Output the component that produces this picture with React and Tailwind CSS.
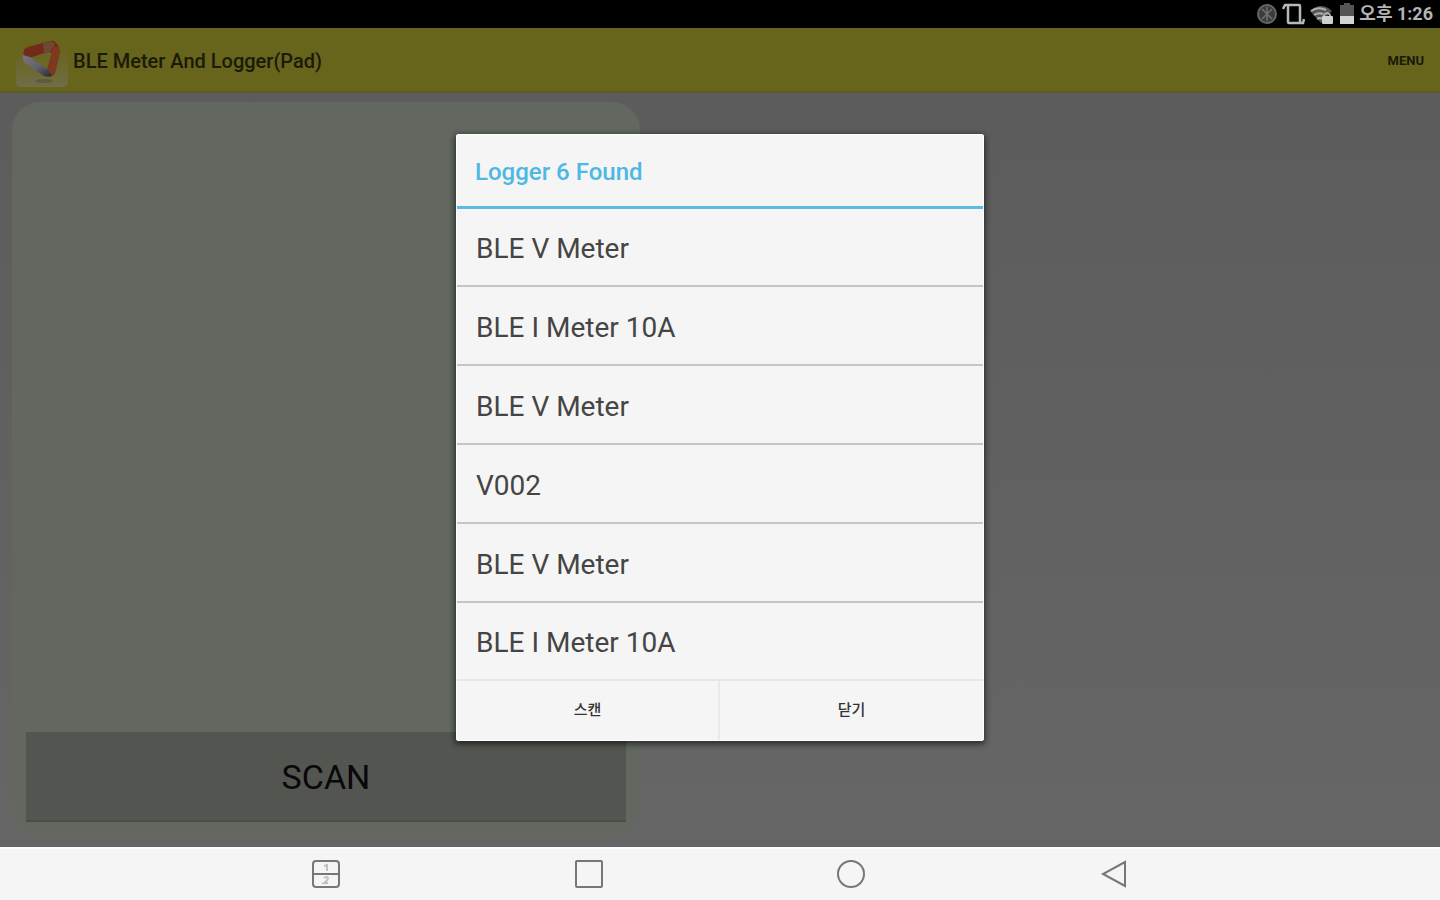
import { useState } from 'react'

const loggers = ['BLE V Meter', 'BLE I Meter 10A', 'BLE V Meter', 'V002', 'BLE V Meter', 'BLE I Meter 10A']

function StatusBar() {
  return (
    <div className="h-7 bg-black flex items-center justify-end gap-1 pr-[7px] text-[#b4b4b4]">
      <svg width="22" height="22" viewBox="0 0 22 22" fill="none" aria-hidden="true">
        <circle cx="11" cy="11" r="9" stroke="#666" strokeWidth="2" fill="#3c3c3c" />
        <path d="M6 6l10 10M6 16L16 6M11 4v14" stroke="#707070" strokeWidth="1.5" />
      </svg>
      <svg width="23" height="24" viewBox="0 0 23 24" fill="none" stroke="#b8b8b8" aria-hidden="true">
        <rect x="6" y="3" width="12" height="18" rx="1" strokeWidth="2.5" />
        <path d="M1 7l2-4h4M22 17l-1 4h-4" strokeWidth="2.5" />
      </svg>
      <svg width="26" height="22" viewBox="0 0 26 22" fill="none" aria-hidden="true">
        <path d="M1 8Q12-2 23 8L18 13L12 20Z" fill="#555" />
        <path d="M2 8Q9 3 17 7M5 12q5-3 9-1M8 16q3-2 5 0" stroke="#b0b0b0" strokeWidth="2" />
        <path d="M15 14v-2q3-4 6 0v2" stroke="#aaa" strokeWidth="2" />
        <rect x="13" y="13" width="11" height="8" rx="1" fill="#d0d0d0" />
      </svg>
      <svg width="16" height="22" viewBox="0 0 16 22" aria-hidden="true">
        <path d="M5 0h6v2h4v11H1V2h4z" fill="#555" />
        <path d="M1 13h14v8H1z" fill="#d4d4d4" />
      </svg>
      <span className="text-[18px] leading-7 font-bold whitespace-nowrap">오후 1:26</span>
    </div>
  )
}

function AppLogo() {
  return (
    <svg width="52" height="52" viewBox="0 0 52 52" aria-hidden="true">
      <defs>
        <linearGradient id="plate" x1="0" y1="0" x2="0" y2="1">
          <stop offset="0.2" stopColor="#6e6b36" stopOpacity="0" />
          <stop offset="1" stopColor="#706d48" />
        </linearGradient>
        <linearGradient id="blade" x1="0" y1="0" x2="1" y2="1">
          <stop offset="0" stopColor="#77747c" />
          <stop offset="0.5" stopColor="#666471" />
          <stop offset="1" stopColor="#29282e" />
        </linearGradient>
      </defs>
      <rect width="52" height="52" rx="5" fill="url(#plate)" />
      <path d="M7 22l1-7q1-2 4-3L34 6q3-1 5 1l4 4-5 7-6-1-19 6z" fill="#722a1b" />
      <path d="M27 8l8-2 4 3-4 7-7 2z" fill="#6d4935" />
      <path d="M37 11q8 0 7 6l-4 18q-1 6-6 7l-3-8 5-17z" fill="#7d381f" />
      <path d="M7 20l7 2 18 13 4 5q-2 3-8 1L9 28q-3-2-2-8z" fill="url(#blade)" />
      <ellipse cx="28" cy="46" rx="9" ry="2" fill="#4d4a3b" opacity="0.5" />
    </svg>
  )
}

function LoggerDialog({ onClose }) {
  return (
    <div className="absolute inset-0 flex items-center justify-center">
      <div role="dialog" aria-labelledby="dialog-title"
        className="w-[528px] max-w-full bg-[#f5f5f5] rounded-xs border border-white shadow-[0_2px_6px_1px_rgba(0,0,0,0.6)]">
        <h2 id="dialog-title" className="h-[74px] px-[18px] border-b-3 border-[#5dbae0] text-[24px] leading-[74px] font-medium text-[#4db8e4]">
          Logger 6 Found
        </h2>
        <ul className="divide-y-2 divide-[#c6c6c6] border-b-2 border-[#e6e6e6]">
          {loggers.map((name, i) => (
            <li key={i} className="h-[79px] first:h-[78px] last:h-[76px] flex">
              <button className="flex-1 px-[19px] pt-1 text-left text-[28px] leading-8 text-[#454545]">{name}</button>
            </li>
          ))}
        </ul>
        <div className="h-[59px] grid grid-cols-2 divide-x-2 divide-[#e9e9e9] text-[15px] font-medium text-[#333]">
          <button>스캔</button>
          <button onClick={onClose}>닫기</button>
        </div>
      </div>
    </div>
  )
}

function NavBar() {
  return (
    <nav className="h-[53px] bg-[#f5f5f5] border-t-2 border-white pb-[2px]">
      <div className="w-[73%] h-full mx-auto grid grid-cols-4 text-[#74787b]">
        <button aria-label="Split screen" className="flex items-center justify-center">
          <svg width="30" height="30" viewBox="0 0 30 30" fill="none" stroke="currentColor" strokeWidth="2">
            <rect x="2" y="2" width="26" height="26" rx="3" />
            <path d="M2 15h26" />
            <path d="M13 7l3-1v6M13 19q3-2 4 0 0 2-4 5h4" stroke="#bfc1c3" />
          </svg>
        </button>
        <button aria-label="Recent apps" className="flex items-center justify-center">
          <svg width="30" height="30" viewBox="0 0 30 30" fill="none" stroke="currentColor" strokeWidth="2">
            <rect x="2" y="2" width="26" height="26" rx="1" />
          </svg>
        </button>
        <button aria-label="Home" className="flex items-center justify-center">
          <svg width="30" height="30" viewBox="0 0 30 30" fill="none" stroke="currentColor" strokeWidth="2">
            <circle cx="15" cy="15" r="13" />
          </svg>
        </button>
        <button aria-label="Back" className="flex items-center justify-center">
          <svg width="30" height="30" viewBox="0 0 30 30" fill="none" stroke="currentColor" strokeWidth="2">
            <path d="M26 3v24L4 15z" />
          </svg>
        </button>
      </div>
    </nav>
  )
}

export default function App() {
  const [open, setOpen] = useState(true)

  return (
    <div className="min-h-screen flex flex-col font-[Roboto,'Noto_Sans_CJK_KR',sans-serif]">
      <StatusBar />
      <div className="relative flex-1 flex flex-col">
        <header className="h-[65px] bg-[#67641b] border-b-2 border-[#5f5c24] flex items-center px-4 pt-[2px] text-[#1b1a08]">
          <AppLogo />
          <h1 className="flex-1 ml-[5px] text-[20px] leading-6 font-medium">BLE Meter And Logger(Pad)</h1>
          <button className="text-[13px] font-bold">MENU</button>
        </header>
        <main className="flex-1 flex bg-linear-to-b from-[#5c5c5c] to-[#666666] pt-[9px] pb-[11px]">
          <div className="w-4/9 pl-3 flex">
            <section className="flex-1 rounded-[28px] bg-[#62675f] p-[14px] flex flex-col justify-end">
              <button onClick={() => setOpen(true)}
                className="h-[90px] bg-[#535550] border-b-2 border-[#4b4d48] pt-[2px] text-[34px] text-[#080808]">
                SCAN
              </button>
            </section>
          </div>
        </main>
        {open && <LoggerDialog onClose={() => setOpen(false)} />}
      </div>
      <NavBar />
    </div>
  )
}
